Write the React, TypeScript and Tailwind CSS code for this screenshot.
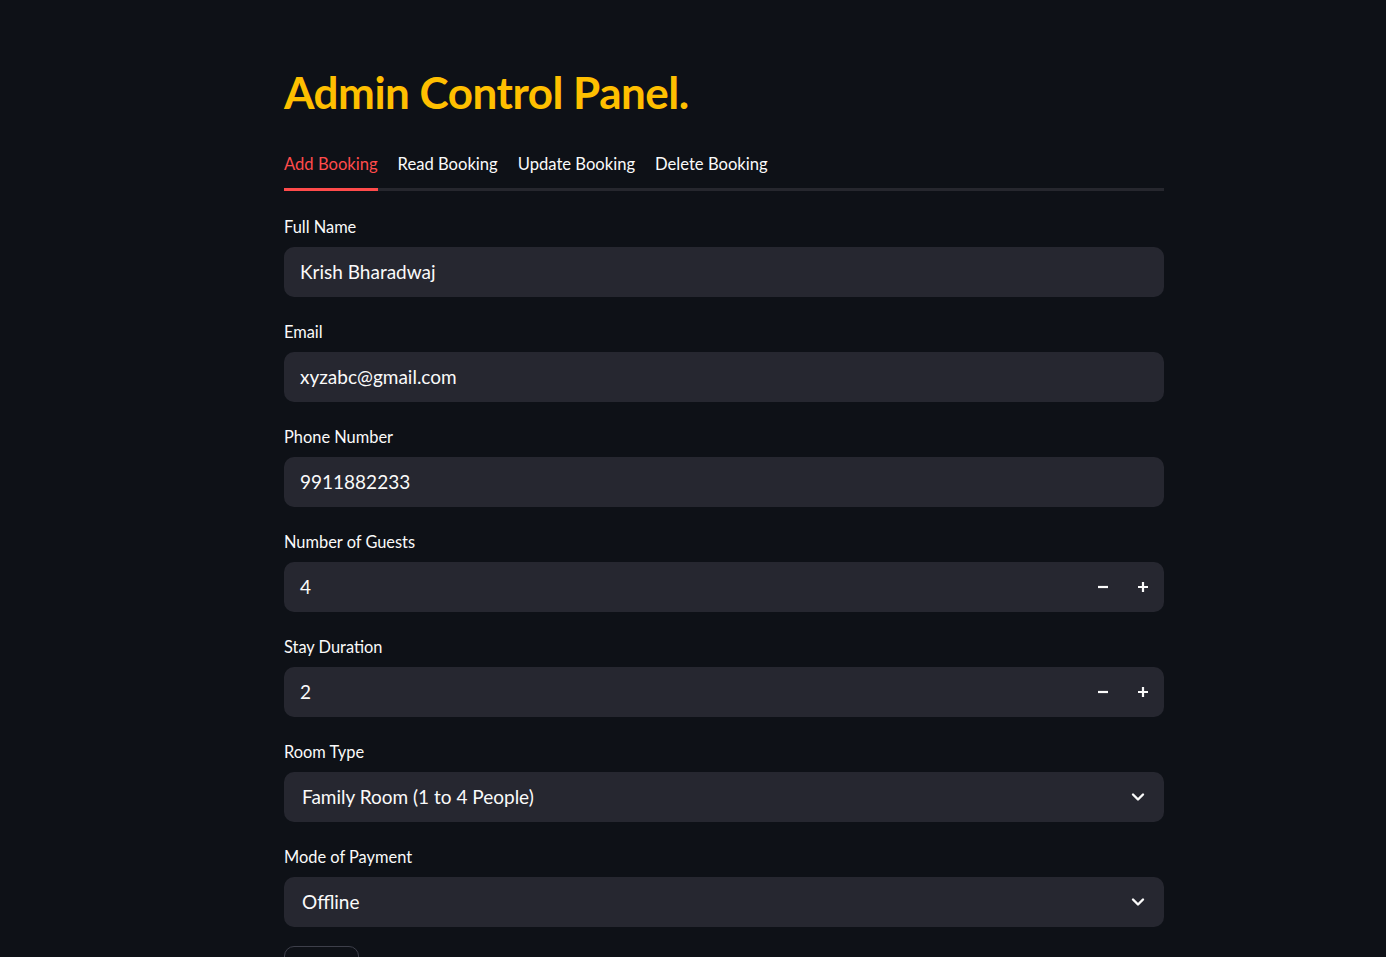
import { useState } from "react";

const tabs = ["Add Booking", "Read Booking", "Update Booking", "Delete Booking"];

function Label({ text }: { text: string }) {
  return <label className="block h-5 text-[16.4px] leading-5 mb-[10px]">{text}</label>;
}

function TextField({ label, value }: { label: string; value: string }) {
  return (
    <div>
      <Label text={label} />
      <div className="h-[50px] rounded-[10px] bg-[#262730] flex items-center px-4 text-[19px]">
        {value}
      </div>
    </div>
  );
}

function NumberField({ label, value }: { label: string; value: string }) {
  return (
    <div>
      <Label text={label} />
      <div className="h-[50px] rounded-[10px] bg-[#262730] flex items-center pl-4 text-[19px]">
        <span className="flex-1">{value}</span>
        <button className="w-10 h-full flex items-center justify-center">
          <svg width="12" height="12" viewBox="0 0 12 12">
            <path d="M1 6h10" stroke="#fafafa" strokeWidth="2.2" />
          </svg>
        </button>
        <button className="w-10 h-full flex items-center justify-center mr-[1px]">
          <svg width="12" height="12" viewBox="0 0 12 12">
            <path d="M1 6h10M6 1v10" stroke="#fafafa" strokeWidth="2.2" />
          </svg>
        </button>
      </div>
    </div>
  );
}

function SelectField({ label, value }: { label: string; value: string }) {
  return (
    <div>
      <Label text={label} />
      <div className="h-[50px] rounded-[10px] bg-[#262730] flex items-center pl-[18px] pr-[19px] text-[19px]">
        <span className="flex-1">{value}</span>
        <svg width="14" height="14" viewBox="0 0 14 14" fill="none">
          <path d="M2 4.5l5 5 5-5" stroke="#fafafa" strokeWidth="2.4" strokeLinecap="round" strokeLinejoin="round" />
        </svg>
      </div>
    </div>
  );
}

export default function App() {
  const [active, setActive] = useState(0);

  return (
    <div className="min-h-screen bg-[#0e1117] text-[#fafafa] font-['Lato',sans-serif]">
      <div className="ml-[284px] w-[880px] pt-[67px] pb-10">
        <h1 className="text-[44px] leading-[50px] font-bold tracking-[-0.5px] text-[#ffbf00]">
          Admin Control Panel.
        </h1>

        <div className="mt-[35px] flex gap-5 border-b-[3px] border-[#26272e]">
          {tabs.map((t, i) => (
            <button
              key={t}
              onClick={() => setActive(i)}
              className={
                i === active
                  ? "-mb-[3px] pb-3 border-b-[3px] border-[#ff4b4b] text-[16.6px] leading-6 text-[#ff4b4b]"
                  : "-mb-[3px] pb-3 border-b-[3px] border-transparent text-[16.6px] leading-6"
              }
            >
              {t}
            </button>
          ))}
        </div>

        <div className="mt-[26px] flex flex-col gap-[25px]">
          <TextField label="Full Name" value="Krish Bharadwaj" />
          <TextField label="Email" value="xyzabc@gmail.com" />
          <TextField label="Phone Number" value="9911882233" />
          <NumberField label="Number of Guests" value="4" />
          <NumberField label="Stay Duration" value="2" />
          <SelectField label="Room Type" value="Family Room (1 to 4 People)" />
          <SelectField label="Mode of Payment" value="Offline" />
        </div>

        <button className="mt-[19px] h-[64px] w-[75px] rounded-[10px] border border-[#3d3f4a] text-[17px] leading-5">
          Submit
        </button>
      </div>
    </div>
  );
}
